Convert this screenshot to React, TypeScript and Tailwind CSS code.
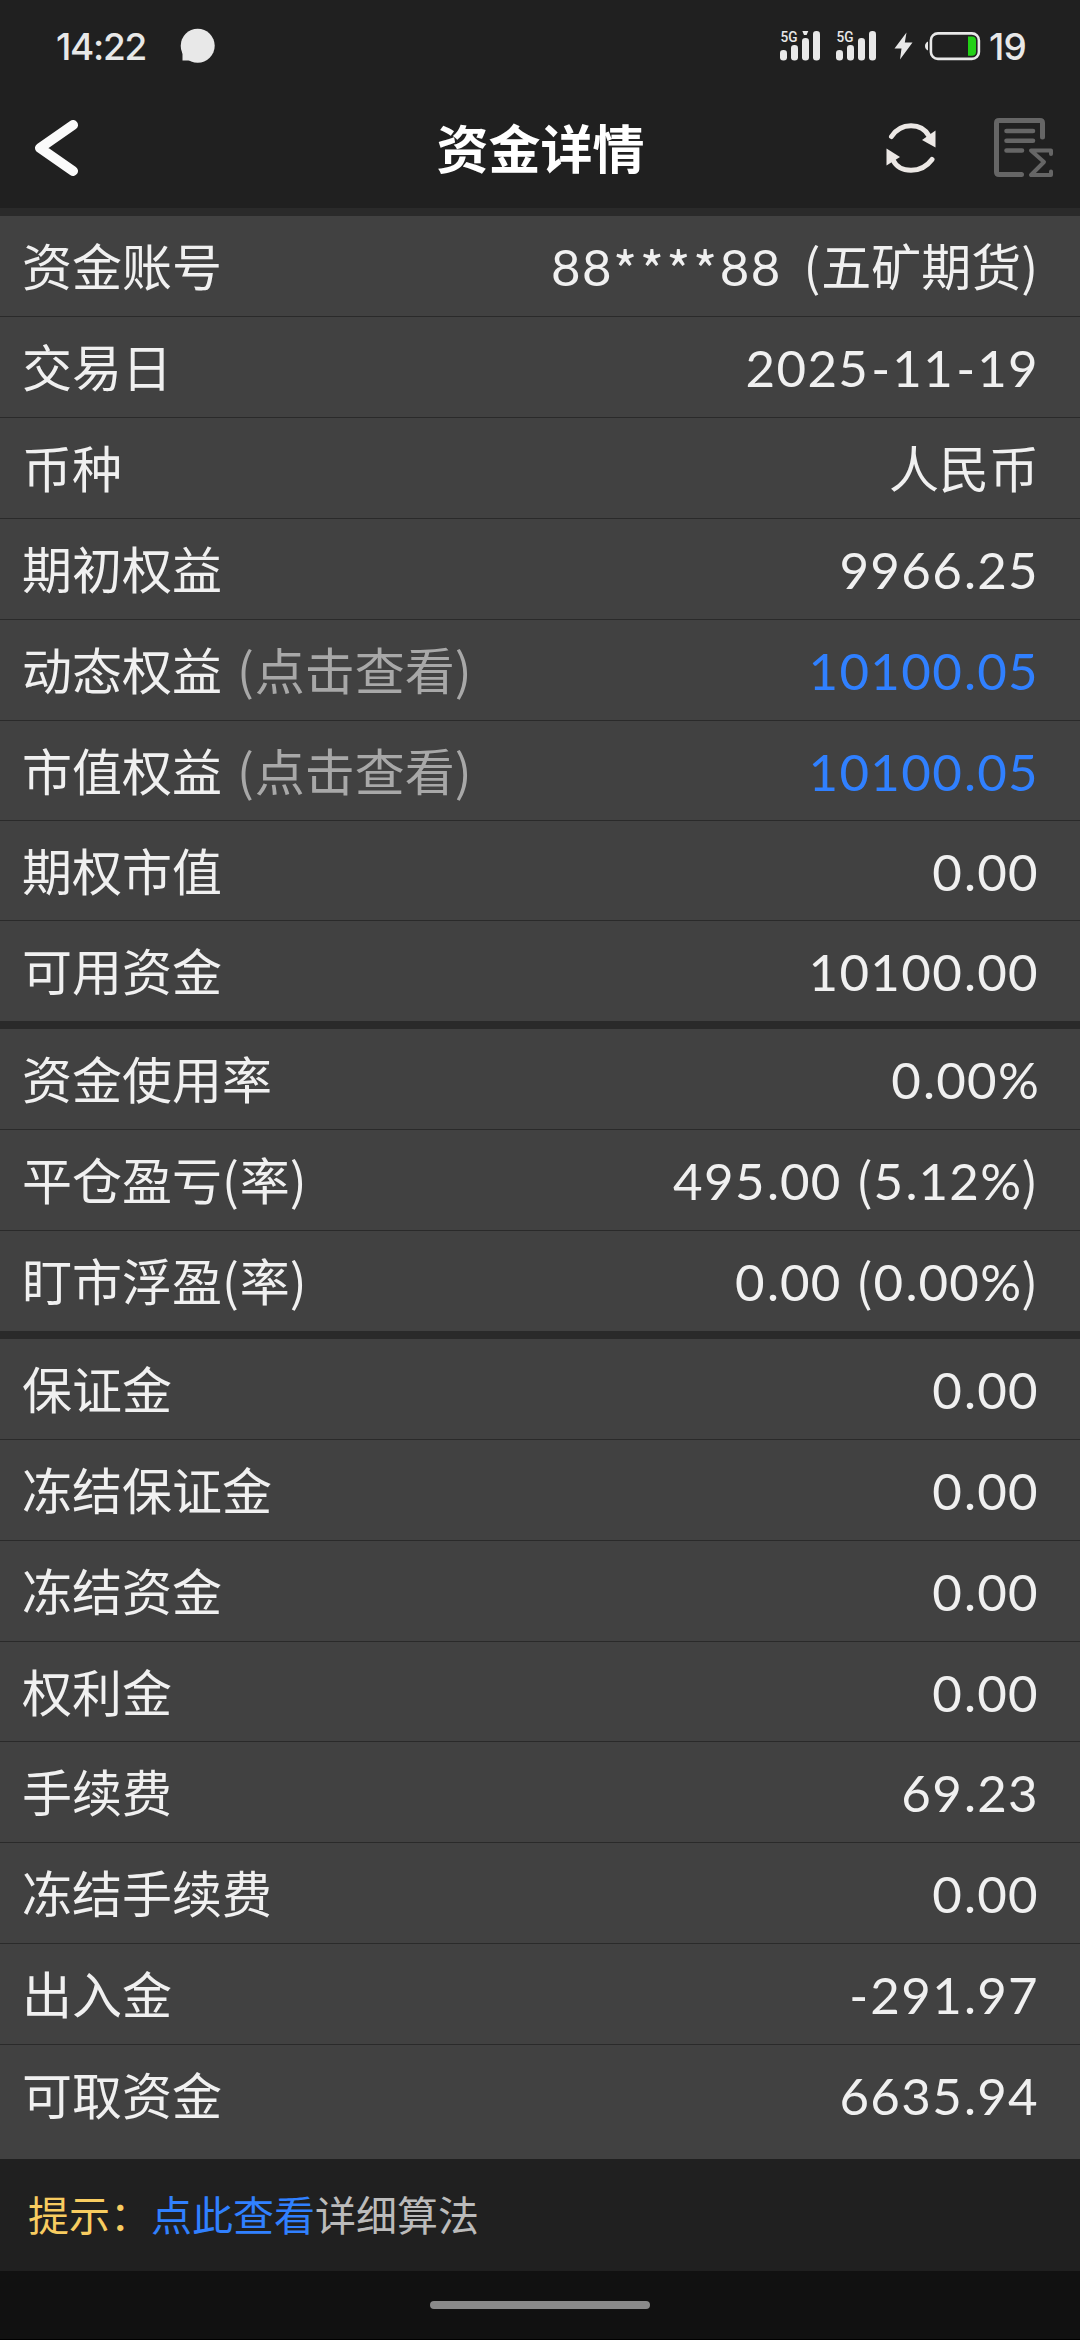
import React from "react";

type Row = { label: string; value: string; hint?: boolean; blue?: boolean; h: string };

const H100 = "h-[100px]";
const H101 = "h-[101px]";

const groups: Row[][] = [
  [
    { label: "资金账号", value: "88****88  (五矿期货)", h: H101 },
    { label: "交易日", value: "2025-11-19", h: H101 },
    { label: "币种", value: "人民币", h: H101 },
    { label: "期初权益", value: "9966.25", h: H101 },
    { label: "动态权益", value: "10100.05", hint: true, blue: true, h: H101 },
    { label: "市值权益", value: "10100.05", hint: true, blue: true, h: H100 },
    { label: "期权市值", value: "0.00", h: H100 },
    { label: "可用资金", value: "10100.00", h: H100 },
  ],
  [
    { label: "资金使用率", value: "0.00%", h: H101 },
    { label: "平仓盈亏(率)", value: "495.00 (5.12%)", h: H101 },
    { label: "盯市浮盈(率)", value: "0.00 (0.00%)", h: H100 },
  ],
  [
    { label: "保证金", value: "0.00", h: H101 },
    { label: "冻结保证金", value: "0.00", h: H101 },
    { label: "冻结资金", value: "0.00", h: H101 },
    { label: "权利金", value: "0.00", h: H100 },
    { label: "手续费", value: "69.23", h: H101 },
    { label: "冻结手续费", value: "0.00", h: H101 },
    { label: "出入金", value: "-291.97", h: H101 },
    { label: "可取资金", value: "6635.94", h: H100 },
  ],
];

/* Splits a string so that Latin digits and symbols get their own metrics. */
function Mixed({ text }: { text: string }) {
  const parts = text.split(/([()]|\*+|-|\.|%| +|[\u4e00-\u9fa5]+)/).filter(Boolean);
  return (
    <>
      {parts.map((p, i) => {
        if (/^\d+$/.test(p)) return <span key={i} className="font-['Lato'] text-[51px] tracking-[1.35px]">{p}</span>;
        if (p === ".") return <span key={i} className="inline-block w-[14px] text-center font-['Lato'] text-[51px]">.</span>;
        if (p === "-") return <span key={i} className="inline-block w-[23px] text-center font-['Lato'] text-[51px]">-</span>;
        if (p === "%") return <span key={i} className="inline-block w-[41px] text-center font-['Lato'] text-[51px]">%</span>;
        if (p[0] === "*") return <span key={i} className="relative top-1 text-[52px] tracking-[2.4px]">{p}</span>;
        if (p === " ") return <span key={i} className="inline-block w-[14px] whitespace-pre"> </span>;
        if (p === "  ") return <span key={i} className="inline-block w-[22px] whitespace-pre">{"  "}</span>;
        if (p === "(" || p === ")") return <span key={i} className="tracking-[0.8px]">{p}</span>;
        return <span key={i}>{p}</span>;
      })}
    </>
  );
}

function Signal({ arrow }: { arrow?: boolean }) {
  return (
    <svg className="overflow-visible" width="40" height="30" viewBox="0 0 40 30" fill="#e8e8e8">
      <text x="0.5" y="11" fontFamily="Roboto" fontSize="15" fontWeight="500" textLength="17" lengthAdjust="spacingAndGlyphs">5G</text>
      <rect x="0" y="19" width="7" height="10.5" rx="3.3" />
      <rect x="11" y="14" width="7" height="15.5" rx="3.3" />
      <rect x="22" y="7" width="7" height="22.5" rx="3.3" />
      <rect x="33" y="0" width="7" height="29.5" rx="3.3" />
      {arrow && <path d="M22.3 0h6l-1.7 4h-2.6z" />}
    </svg>
  );
}

export default function App() {
  return (
    <div className="flex h-[2340px] w-[1080px] flex-col overflow-hidden bg-[#2a2a2a] font-['Noto_Sans_CJK_SC',sans-serif] text-[#f0f0f0]">
      <header className="flex h-[208px] flex-col bg-[#202020]">
        <div className="flex h-[92px] items-center pl-[56px] pr-[55px] text-[#e8e8e8]">
          <span className="w-[124px] font-['Inter'] text-[37px] font-medium leading-none tracking-[-1.3px]">14:22</span>
          <svg width="36" height="36" viewBox="0 0 36 36" fill="#e8e8e8">
            <circle cx="17.7" cy="17.7" r="17" />
            <path d="M2.5 24V32.5H13z" />
          </svg>
          <div className="ml-auto flex items-center">
            <Signal arrow />
            <span className="w-4" />
            <Signal />
            <svg className="ml-[18px]" width="19" height="28" viewBox="0 0 19 28" fill="#e8e8e8">
              <path d="M12.5 0.5L0.5 16.5H7.5L6 27.5L18.5 10.5H10.8z" />
            </svg>
            <svg className="ml-[12px]" width="56" height="30" viewBox="0 0 56 30">
              <path d="M3 10.5Q0 12 0 15T3 19.5z" fill="#e8e8e8" />
              <rect x="5.9" y="2.4" width="48" height="25.5" rx="7" fill="none" stroke="#e8e8e8" strokeWidth="2.6" />
              <path d="M43 5.5H47Q51 5.5 51 9.5V20.7Q51 24.7 47 24.7H43z" fill="#22d016" />
            </svg>
            <span className="ml-[8px] w-[36px] font-['Inter'] text-[37px] font-medium leading-none tracking-[-0.9px]">19</span>
          </div>
        </div>
        <div className="flex h-[116px] items-center justify-between pb-1 pl-[34px] pr-[26px]">
          <svg width="45" height="58" viewBox="0 0 45 58" fill="none" stroke="#fafafa" strokeWidth="10" strokeLinecap="round" strokeLinejoin="round">
            <path d="M39 6L6 29L39 52" />
          </svg>
          <h1 className="ml-[116px] pb-0.5 text-[52px] font-bold leading-none text-white">资金详情</h1>
          <div className="flex items-center gap-[58px]">
            <svg width="50" height="50" viewBox="0 0 50 50" fill="none" stroke="#ece8e5" strokeWidth="5" strokeLinecap="round">
              <path d="M5.5 13.5Q12.5 2.7 25 2.7T43 13" />
              <path d="M46 36.5Q38 47.3 25 47.3T7 37" />
              <path d="M49.5 7.5V24.5L36 17z" fill="#ece8e5" stroke="none" />
              <path d="M0.5 25.5V42.5L14 34z" fill="#ece8e5" stroke="none" />
            </svg>
            <svg width="60" height="60" viewBox="0 0 60 60" fill="none" stroke="#666" strokeWidth="5" strokeLinecap="round" strokeLinejoin="round">
              <path d="M48.5 19V5Q48.5 2.5 46 2.5H5Q2.5 2.5 2.5 5V54Q2.5 56.5 5 56.5H27.5" />
              <path d="M12.5 13H39M12.5 22.7H39M12.5 32.5H28" strokeWidth="4.6" />
              <path d="M57 36V32.500H37L50 44L37 57H57V53.500" strokeWidth="4" />
            </svg>
          </div>
        </div>
      </header>

      <main className="mt-2 flex h-[1943px] flex-col gap-2 bg-[#2a2a2a]">
        {groups.map((g, gi) => (
          <section key={gi} className={"bg-[#414141] " + (gi === 2 ? "grow" : "")}>
            {g.map((r, i) => (
              <div
                key={r.label}
                className={
                  "flex items-start justify-between pl-[22px] pr-[41px] text-[50px] leading-[96px] whitespace-nowrap " +
                  r.h +
                  (i < g.length - 1 ? " border-b border-[#2a2a2a]" : "")
                }
              >
                <span className="flex">
                  <span>
                    <Mixed text={r.label} />
                  </span>
                  {r.hint && (
                    <span className="ml-[15px] text-[#a8a8a8]">
                      <Mixed text="(点击查看)" />
                    </span>
                  )}
                </span>
                <span className={r.blue ? "text-[#3080ff]" : ""}>
                  <Mixed text={r.value} />
                </span>
              </div>
            ))}
          </section>
        ))}
      </main>

      <footer className="flex h-[112px] items-center bg-[#202020] pb-1 pl-[28px] text-[41px] leading-none">
        <span className="text-[#f8cc60]">提示：</span>
        <span className="text-[#3080ff]">点此查看</span>
        <span className="text-[#bbb]">详细算法</span>
      </footer>
      <div className="flex h-[69px] justify-center border-b border-black bg-[#111] pt-[30px]">
        <div className="h-2 w-[220px] rounded-full bg-[#8a8a8a]" />
      </div>
    </div>
  );
}
